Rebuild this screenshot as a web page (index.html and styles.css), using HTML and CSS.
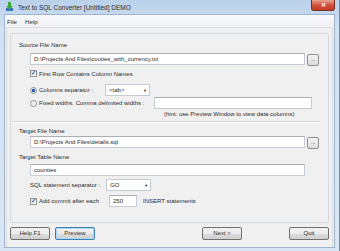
FILE: index.html
```html
<!DOCTYPE html>
<html lang="en">
<head>
    <meta charset="UTF-8">
    <title>Text to SQL Converter</title>
    <link rel="stylesheet" href="styles.css">
</head>
<body>
    <div class="window">
        <div class="titlebar">
            <svg class="app-icon" width="9" height="10" viewBox="0 0 9 10">
                <rect x="1" y="6" width="7" height="3" fill="#3a6fc4"/>
                <path d="M3 0 H6 V4 H8 L4.5 7.5 L1 4 H3 Z" fill="#3aa83a"/>
            </svg>
            <span class="title">Text to SQL Converter [Untitled] DEMO</span>
            <div class="close">&#x2715;</div>
        </div>
        <div class="client">
            <div class="menubar">
                <span>File</span>
                <span>Help</span>
            </div>
            <div class="panel">
                <div class="group">
                    <div class="label first">Source File Name</div>
                    <div class="filerow">
                        <div class="input path">D:\Projects And Files\couties_with_currency.txt</div>
                        <div class="browse">...</div>
                    </div>
                    <div class="check-row">
                        <span class="box">&#10003;</span>First Row Contains Column Names
                    </div>
                    <div class="opt-row sep-row">
                        <span class="radio on"></span>Columns separator :
                        <div class="combo">&lt;tab&gt;<span class="arrow">&#9660;</span></div>
                    </div>
                    <div class="opt-row">
                        <span class="radio"></span>Fixed widths. Comma delimited widths :
                        <div class="input widths"></div>
                    </div>
                    <div class="hint">(hint: use Preview Window to view data columns)</div>
                    <div class="divider"></div>
                    <div class="label">Target File Name</div>
                    <div class="filerow tight">
                        <div class="input path">D:\Projects And Files\details.sql</div>
                        <div class="browse">...</div>
                    </div>
                    <div class="label">Target Table Name</div>
                    <div class="input path table">counties</div>
                    <div class="opt-row stmt-row">
                        <span class="stmt-label">SQL statement separator :</span>
                        <div class="combo">GO<span class="arrow">&#9660;</span></div>
                    </div>
                    <div class="opt-row commit-row">
                        <span class="box">&#10003;</span>Add commit after each
                        <div class="input count">250</div>
                        <span>INSERT statements</span>
                    </div>
                </div>
                <div class="buttons">
                    <div class="btn">Help F1</div>
                    <div class="btn focused">Preview</div>
                    <div class="btn next">Next &gt;</div>
                    <div class="btn quit">Quit</div>
                </div>
            </div>
        </div>
    </div>
</body>
</html>
```

FILE: styles.css
```css
*{
    margin: 0;
    padding: 0;
    box-sizing: border-box;
}
body{
    font-family: "Liberation Sans", Arial, sans-serif;
    font-size: 6px;
    color: #2a2a2a;
    background: #ffffff;
}
.window{
    width: 340px;
    height: 251px;
    display: flex;
    flex-direction: column;
    background: linear-gradient(#b9d1ea, #d3e2f3 30px, #d8e6f5);
    border-right: 1px solid #6f8cad;
}
.titlebar{
    height: 14px;
    display: flex;
    align-items: center;
    padding-left: 5px;
}
.app-icon{
    margin-right: 4px;
}
.title{
    font-size: 6.5px;
    color: #2b2b2b;
}
.close{
    margin-left: auto;
    margin-right: 4px;
    align-self: flex-start;
    width: 24px;
    height: 11px;
    background: linear-gradient(#e8a394, #d2533e 50%, #c23a22);
    border: 1px solid #7a2c20;
    border-top: none;
    border-radius: 0 0 3px 3px;
    color: #ffffff;
    font-size: 6px;
    font-weight: bold;
    text-align: center;
    line-height: 10px;
}
.client{
    flex: 1;
    margin: 0 4px 3px 4px;
    display: flex;
    flex-direction: column;
    background: #f0f0f0;
    border: 1px solid #9fb4cc;
}
.menubar{
    height: 12px;
    display: flex;
    align-items: center;
    gap: 8px;
    padding-left: 2px;
    background: linear-gradient(#f8f9fb, #eef1f5);
    font-size: 6.2px;
}
.panel{
    flex: 1;
    margin: 0 1px 0 1px;
    border: 1px solid #dcdcdc;
    border-bottom: none;
    display: flex;
    flex-direction: column;
    padding: 5px 3px 0 3px;
}
.group{
    height: 190px;
    border: 1px solid #d3dbe0;
    border-radius: 2px;
    display: flex;
    flex-direction: column;
}
.label{
    height: 8px;
    line-height: 8px;
    margin-left: 8px;
    margin-top: 4px;
}
.label.first{
    margin-top: 7px;
}
.filerow{
    display: flex;
    align-items: flex-start;
    margin-top: 4px;
    margin-left: 19px;
}
.filerow.tight{
    margin-top: 1px;
}
.input{
    background: #ffffff;
    border: 1px solid #c4cbd2;
    border-top-color: #abadb3;
    height: 12px;
    line-height: 10px;
    padding-left: 3px;
}
.path{
    width: 275px;
}
.table{
    margin-left: 19px;
    margin-top: 3px;
    height: 12px;
}
.browse{
    width: 12px;
    height: 12px;
    margin-left: 2px;
    margin-top: 1px;
    border: 1px solid #8d8d8d;
    border-radius: 2px;
    background: linear-gradient(#f4f4f4, #dcdcdc);
    font-size: 5px;
    line-height: 8px;
    text-align: center;
    color: #333333;
}
.check-row{
    display: flex;
    align-items: center;
    height: 9px;
    margin-top: 3px;
    margin-left: 19px;
}
.box{
    width: 7px;
    height: 7px;
    border: 1px solid #8e8f8f;
    background: linear-gradient(#e6e6e6, #ffffff);
    margin-right: 2px;
    font-size: 6px;
    line-height: 5px;
    text-align: center;
    color: #2a4d8c;
    font-weight: bold;
}
.opt-row{
    display: flex;
    align-items: center;
    height: 12px;
    margin-top: 1px;
    margin-left: 19px;
}
.sep-row{
    margin-top: 6px;
}
.radio{
    width: 7px;
    height: 7px;
    border-radius: 50%;
    border: 1px solid #8e8f8f;
    background: #f2f2f2;
    margin-right: 2px;
}
.radio.on{
    background: radial-gradient(circle, #2c5fb0 0 1.6px, #e8eef6 2px);
}
.combo{
    width: 45px;
    height: 12px;
    margin-left: 12px;
    background: #ffffff;
    border: 1px solid #c4cbd2;
    display: flex;
    align-items: center;
    padding-left: 3px;
}
.arrow{
    margin-left: auto;
    margin-right: 2px;
    font-size: 4px;
}
.widths{
    width: 158px;
    margin-left: 10px;
}
.hint{
    height: 8px;
    line-height: 8px;
    margin-top: 1px;
    margin-left: 153px;
}
.divider{
    height: 2px;
    margin-top: 3px;
    margin-right: 8px;
    border-top: 1px solid #d5d5d5;
    border-bottom: 1px solid #ffffff;
}
.stmt-row{
    margin-top: 3px;
}
.stmt-label{
    margin-left: 0;
}
.stmt-row .combo{
    margin-left: 6px;
}
.commit-row{
    margin-top: 4px;
}
.count{
    width: 28px;
    margin-left: 10px;
    margin-right: 6px;
}
.buttons{
    display: flex;
    margin-top: 4px;
}
.btn{
    width: 40px;
    height: 13px;
    margin-right: 5px;
    border: 1px solid #707070;
    border-radius: 2px;
    background: linear-gradient(#f2f2f2, #ebebeb 50%, #dddddd 51%, #cfcfcf);
    text-align: center;
    line-height: 11px;
}
.btn.focused{
    border-color: #3c7fb1;
    box-shadow: inset 0 0 0 1px #a9dbf6;
}
.btn.next{
    margin-left: auto;
    margin-right: 47px;
}
.btn.quit{
    margin-right: 0;
}
```
